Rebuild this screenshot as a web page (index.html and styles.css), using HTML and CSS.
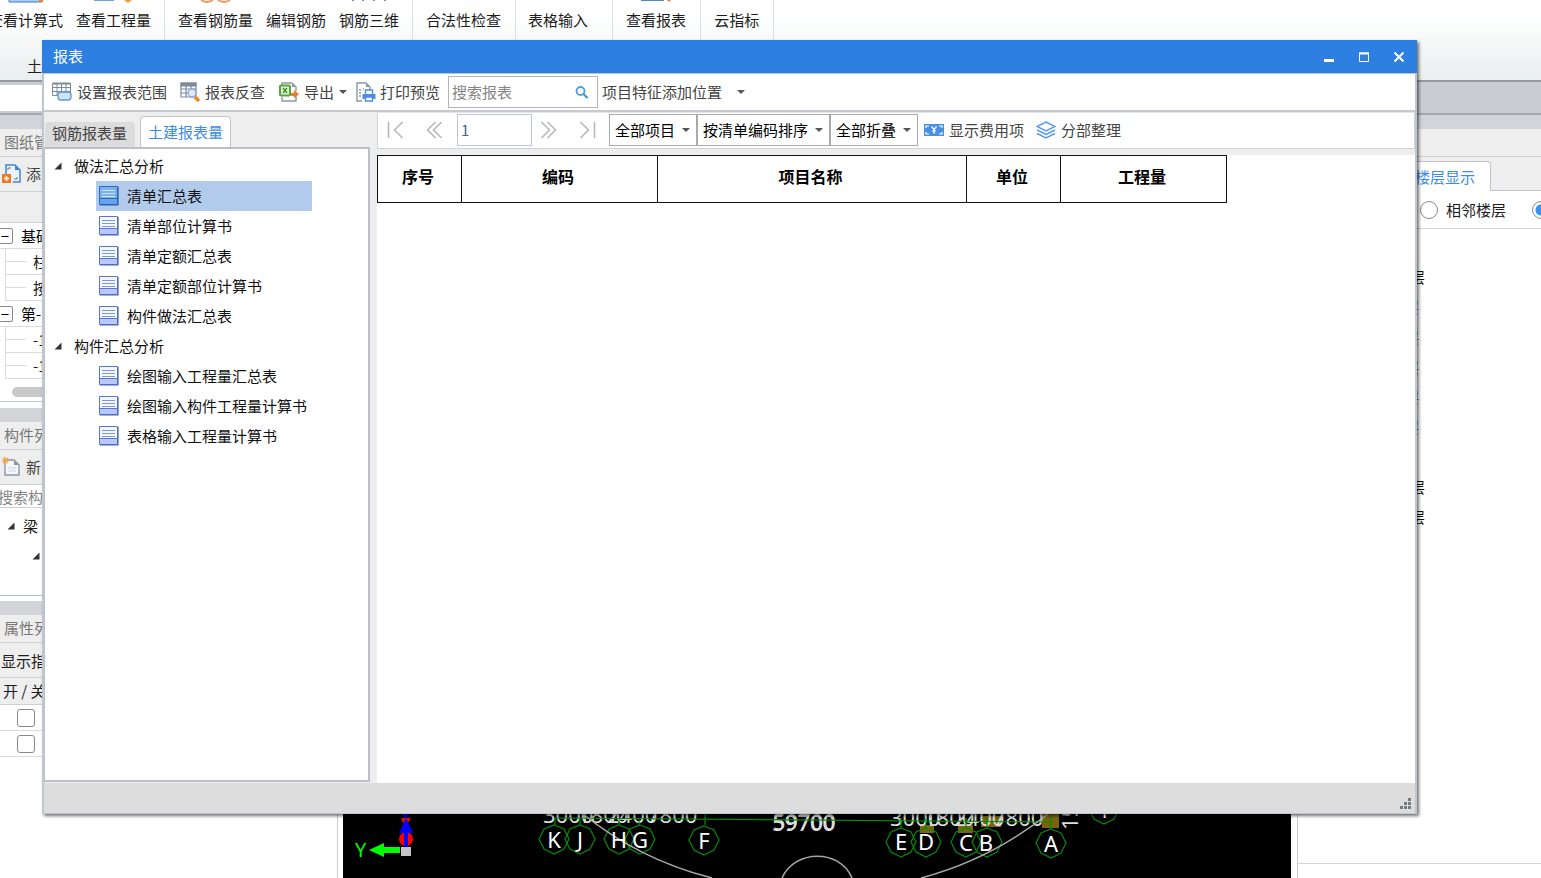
FILE: index.html
```
<!DOCTYPE html>
<html lang="zh-CN">
<head>
<meta charset="utf-8">
<title>报表</title>
<link rel="stylesheet" href="styles.css">
</head>
<body>
<svg class="defs" aria-hidden="true">
  <symbol id="doc" viewBox="0 0 20 20">
    <path d="M.5 .5h18v18H.5z" fill="#f4f7ff" stroke="#5676cf"/>
    <path d="M1 13h17v5H1z" fill="#b9c8ff"/>
    <path d="M1 12.500h17" stroke="#5676cf"/>
    <path d="M3 4.500h13M3 7.500h13M3 10.500h13" stroke="#7c98e2"/>
    <path d="M1 19h18.500M19 1v18.500" stroke="#4a66b4" stroke-width="1.200"/>
  </symbol>
  <symbol id="doc-on" viewBox="0 0 20 20">
    <path d="M.5 .5h18v18H.5z" fill="#78b0f0" stroke="#2f6cc0"/>
    <path d="M1 13h17v5H1z" fill="#66a4ee"/>
    <path d="M1 12.500h17" stroke="#2f6cc0"/>
    <path d="M3 4.500h13M3 7.500h13M3 10.500h13" stroke="#cfe4fb"/>
    <path d="M1 19h18.500M19 1v18.500" stroke="#2a5ca6" stroke-width="1.200"/>
  </symbol>
  <symbol id="twisty" viewBox="0 0 8 8"><path d="M7.500 .5v7H.5z" fill="#333"/></symbol>
</svg>

<div class="app">
  <header class="ribbon">
    <div class="ribbon-groups">
      <div class="group">
        <button class="rbtn"><svg width="36" height="3"><path d="M1 0v2h33V0" fill="#a9cdf5" stroke="#3e7ecb"/><path d="M31 0h4v2h-4z" fill="#f08030"/></svg>查看计算式</button>
        <button class="rbtn"><svg width="40" height="3"><path d="M0 0h20v1H0z" fill="#6ba4ea"/><path d="M30 0h8l-4 3z" fill="#f39a33"/></svg>查看工程量</button>
      </div>
      <div class="group">
        <button class="rbtn"><svg width="34" height="3"><path d="M2 0q6 4 12 0M19 0q6 4 12 0" fill="none" stroke="#f29a62" stroke-width="2"/></svg>查看钢筋量</button>
        <button class="rbtn"><svg width="34" height="3"></svg>编辑钢筋</button>
        <button class="rbtn"><svg width="34" height="3"><path d="M1 0v1M11 0v1M22 0v1M33 0v1" stroke="#6a93c8" stroke-width="2"/></svg>钢筋三维</button>
      </div>
      <div class="group single"><button class="rbtn"><svg width="34" height="3"></svg>合法性检查</button></div>
      <div class="group wide"><button class="rbtn"><svg width="34" height="3"></svg>表格输入</button></div>
      <div class="group single"><button class="rbtn"><svg width="30" height="3"><path d="M0 0h23v1H0z" fill="#4b85d0"/><path d="M26 0h4l-2 2z" fill="#f08030"/></svg>查看报表</button></div>
      <div class="group single"><button class="rbtn"><svg width="34" height="3"></svg>云指标</button></div>
    </div>
    <div class="ribbon-caption">土</div>
  </header>
  <div class="strip"><div class="strip-box"></div></div>

  <div class="work">
    <aside class="left">
      <section>
        <h2 class="pane-title">图纸管</h2>
        <div class="pane-bar"><button class="tool">
          <svg width="20" height="20" viewBox="0 0 20 20"><path d="M4 10V1h9l5 5v12h-7" fill="#eaf3fd" stroke="#3f84d6" stroke-width="1.5"/><path d="M13 1v5h5z" fill="#3f84d6"/><path d="M6 6V4h3M15 13v2h-3" fill="none" stroke="#777"/><path d="M0 10h9v9H0z" fill="#ef7a25"/><path d="M4.500 12v5M2 14.500h5" stroke="#fff" stroke-width="1.5"/></svg>添</button></div>
        <div class="grid-head"></div>
        <ul class="drawings">
          <li class="parent"><span class="box">−</span>基础</li>
          <li class="child">柱</li>
          <li class="child">按</li>
          <li class="parent"><span class="box">−</span>第-</li>
          <li class="child">-1</li>
          <li class="child">-1</li>
        </ul>
        <div class="scroll"><span></span></div>
      </section>
      <section class="parts">
        <h2 class="pane-title">构件列</h2>
        <div class="pane-bar"><button class="tool">
          <svg width="20" height="20" viewBox="0 0 20 20"><path d="M3 3h9l5 5v10H3z" fill="#f4f6f8" stroke="#8a97a5" stroke-width="1.4"/><path d="M12 3v5h5z" fill="#8a97a5"/><path d="M6 11h8M6 14h8" stroke="#ccd3da"/><path d="M3 0v7M0 3.500h7M1 1l5 5M6 1L1 6" stroke="#f6a13a" stroke-width="1.2"/></svg>新</button></div>
        <input class="part-search" type="text" placeholder="搜索构" aria-label="搜索构件">
        <ul class="part-tree">
          <li><svg width="8" height="8"><use href="#twisty"/></svg>梁</li>
          <li class="deep"><svg width="8" height="8"><use href="#twisty"/></svg></li>
        </ul>
      </section>
      <section class="props">
        <h2 class="pane-title">属性列</h2>
        <div class="props-bar">显示指</div>
        <div class="props-head">开 / 关</div>
        <div class="props-row"><input type="checkbox" aria-label="开关一"></div>
        <div class="props-row"><input type="checkbox" aria-label="开关二"></div>
      </section>
    </aside>

    <main class="canvas">
      <svg class="model" viewBox="343 814 948 64" width="948" height="64">
        <g class="dims">
          <text x="543" y="823">3000</text><text x="578" y="823">1800</text><text x="607" y="823">2400</text><text x="647" y="823">7800</text>
          <text x="772" y="831">59700</text><text x="773" y="830">59700</text>
        </g>
        <g fill="#7a6410"><path d="M920 825h14v8h-14zM958 825h15v8h-15zM981 816h20v11h-20zM1042 814h17v14h-17z"/></g>
        <g class="dims">
          <text x="890" y="826">3000</text><text x="924" y="826">1800</text><text x="954" y="826">2400</text><text x="993" y="826">7800</text>
          <text x="1078" y="830" transform="rotate(-90 1078 830)">15</text>
        </g>
        <g fill="none" stroke="#068a0c" stroke-width="1.2">
          <path d="M555 818L1052 822M555 818v7M580 818v7M619 818v7M639 818v7M705 814v11M901 818v10M926 818v10M966 818v10M987 818v10M1051 814v15"/>
          <path id="ring" d="M554 825l10 4 5 10-5 10-10 5-10-5-5-10 5-10z"/>
          <use href="#ring" x="26"/><use href="#ring" x="65"/><use href="#ring" x="86"/><use href="#ring" x="150" y="1"/>
          <use href="#ring" x="347" y="3"/><use href="#ring" x="372" y="3"/><use href="#ring" x="412" y="3"/><use href="#ring" x="433" y="3"/><use href="#ring" x="497" y="4"/><use href="#ring" x="550" y="-30"/>
        </g>
        <g fill="none" stroke="#a8a8a8" stroke-width="1.5">
          <path d="M583 814Q640 860 712 878M921 878Q990 860 1048 814M782 878C795 849 840 849 852 878"/>
        </g>
        <g class="axes">
          <text x="554" y="848">K</text><text x="580" y="848">J</text><text x="619" y="848">H</text><text x="640" y="848">G</text><text x="704" y="849">F</text>
          <text x="901" y="850">E</text><text x="926" y="850">D</text><text x="966" y="851">C</text><text x="986" y="851">B</text><text x="1051" y="852">A</text><text x="1104" y="818">1</text>
        </g>
        <circle cx="406" cy="839" r="7" fill="#f00"/>
        <path d="M401 818h10l-3 5h-5z" fill="#e01010"/>
        <path d="M404 847v-14h-5l7-15 7 15h-5v14zM401 814h8l-3 4z" fill="#00f"/>
        <path d="M400 847h-16v-4l-15 7 15 7v-4h16z" fill="#0f0"/>
        <path d="M401 847h10v9h-10z" fill="#c4c4c4"/>
        <text class="axis-y" x="355" y="857">Y</text>
      </svg>
    </main>

    <aside class="right">
      <div class="pane-title"></div>
      <div class="floor-tabs"><button class="floor-tab">楼层显示</button></div>
      <div class="floor-mode">
        <label><input type="radio" name="floor">相邻楼层</label>
        <label><input type="radio" name="floor" checked aria-label="全部楼层"></label>
      </div>
      <ul class="floors">
        <li class="long">层</li><li>层</li><li>层</li><li>层</li><li>层</li><li>层</li><li></li><li class="long">层</li><li class="long">层</li>
      </ul>
    </aside>
  </div>
</div>

<section class="dialog" role="dialog" aria-labelledby="dlg-title">
  <header class="titlebar">
    <h1 id="dlg-title">报表</h1>
    <button aria-label="最小化"><svg width="12" height="12"><path d="M1 9.500h10" stroke="#fff" stroke-width="3"/></svg></button>
    <button aria-label="最大化"><svg width="12" height="12"><path d="M1.500 2v8.500h9V2z" fill="none" stroke="#fff"/><path d="M1 2.500h10" stroke="#fff" stroke-width="2"/></svg></button>
    <button aria-label="关闭"><svg width="12" height="12"><path d="M1.500 1.500l9 9M10.500 1.500l-9 9" stroke="#fff" stroke-width="2"/></svg></button>
  </header>

  <div class="toolbar main-bar">
    <button class="tool">
      <svg width="20" height="20" viewBox="0 0 20 20"><path d="M.5 1.500h18v12H.5zM.5 5.500h18M.5 9.500h18M5 1.500v12M9.500 1.500v12M14 1.500v12" fill="none" stroke="#7d8b99"/><path d="M.5 1.500h18" stroke="#7d8b99" stroke-width="2"/><rect x="6" y="10" width="13" height="8" rx="3" fill="#cfe4fb" stroke="#5a97e0" stroke-width="1.300"/></svg>设置报表范围</button>
    <button class="tool">
      <svg width="20" height="20" viewBox="0 0 20 20"><path d="M1 1h15v14H1zM1 7h15M1 11h15M6 3v12M11 3v12" fill="none" stroke="#7d8b99" stroke-width="1.200"/><path d="M.5 .5h16v4H.5z" fill="#7d8b99"/><circle cx="12" cy="11" r="4" fill="#dfe9fb" stroke="#8ba6e6" stroke-width="1.400"/><path d="M15 15l4 4" stroke="#f08a1c" stroke-width="3.500"/></svg>报表反查</button>
    <button class="tool export">
      <svg width="20" height="20" viewBox="0 0 20 20"><path d="M3 3V1h10l4 4v4M17 14v5H3v-4" fill="none" stroke="#8a97a5" stroke-width="1.400"/><path d="M13 1v4h4z" fill="#8a97a5"/><rect x="1" y="3.500" width="10" height="10" rx="1" fill="#e7f5df" stroke="#58a639" stroke-width="2"/><path d="M4 6l4 5M8 6l-4 5" stroke="#3f8f28" stroke-width="1.500"/><path d="M12 11h3V8l5 4-5 4.500V14h-3z" fill="#f07a25"/></svg>导出<span class="caret"></span></button>
    <button class="tool print">
      <svg width="20" height="20" viewBox="0 0 20 20"><path d="M6 19H1V1h9l4 4v3" fill="none" stroke="#8a97a5" stroke-width="1.400"/><path d="M10 1v4h4z" fill="#8a97a5"/><path d="M3 8h2M3 11h2M3 14h2M7 7h1" stroke="#8a97a5" stroke-width="1.500"/><path d="M9.500 8h7v5h-7zM9.500 15h7v4h-7z" fill="#fff" stroke="#4a8fe2" stroke-width="1.400"/><path d="M6.500 12h13v5h-3v-2h-7v2h-3z" fill="#4a8fe2"/></svg>打印预览</button>
    <label class="search">
      <input type="text" placeholder="搜索报表" aria-label="搜索报表">
      <svg width="14" height="14" viewBox="0 0 14 14"><circle cx="5.500" cy="6" r="4" fill="none" stroke="#4f9fd6" stroke-width="1.800"/><path d="M8.500 9l4 4" stroke="#3f93cf" stroke-width="2.200"/></svg>
    </label>
    <button class="tool place">项目特征添加位置<span class="caret"></span></button>
  </div>

  <div class="dialog-body">
    <nav class="side">
      <div class="tabs" role="tablist">
        <button role="tab" class="tab" aria-selected="false">钢筋报表量</button>
        <button role="tab" class="tab active" aria-selected="true">土建报表量</button>
      </div>
      <div class="tree">
        <div class="node"><svg width="8" height="8"><use href="#twisty"/></svg>做法汇总分析</div>
        <ul>
          <li class="selected"><svg width="20" height="20"><use href="#doc-on"/></svg>清单汇总表</li>
          <li><svg width="20" height="20"><use href="#doc"/></svg>清单部位计算书</li>
          <li><svg width="20" height="20"><use href="#doc"/></svg>清单定额汇总表</li>
          <li><svg width="20" height="20"><use href="#doc"/></svg>清单定额部位计算书</li>
          <li><svg width="20" height="20"><use href="#doc"/></svg>构件做法汇总表</li>
        </ul>
        <div class="node"><svg width="8" height="8"><use href="#twisty"/></svg>构件汇总分析</div>
        <ul>
          <li><svg width="20" height="20"><use href="#doc"/></svg>绘图输入工程量汇总表</li>
          <li><svg width="20" height="20"><use href="#doc"/></svg>绘图输入构件工程量计算书</li>
          <li><svg width="20" height="20"><use href="#doc"/></svg>表格输入工程量计算书</li>
        </ul>
      </div>
    </nav>

    <div class="report">
      <div class="toolbar page-bar">
        <button class="pager" aria-label="首页"><svg width="18" height="18"><path d="M1.500 1v16M15.500 1l-8 8 8 8" /></svg></button>
        <button class="pager" aria-label="上一页"><svg width="18" height="18"><path d="M9.500 1l-8 8 8 8M15.500 1l-8 8 8 8"/></svg></button>
        <input class="page-no" type="text" value="1" aria-label="页码">
        <button class="pager" aria-label="下一页"><svg width="18" height="18"><path d="M2.500 1l8 8-8 8M8.500 1l8 8-8 8"/></svg></button>
        <button class="pager" aria-label="末页"><svg width="18" height="18"><path d="M1.500 1l8 8-8 8M15.500 1v16"/></svg></button>
        <span class="picks">
          <span class="pick"><select aria-label="项目范围"><option>全部项目</option></select></span>
          <span class="pick"><select aria-label="排序"><option>按清单编码排序</option></select></span>
          <span class="pick"><select aria-label="折叠"><option>全部折叠</option></select></span>
        </span>
        <button class="tool soft">
          <svg width="20" height="12" viewBox="0 0 20 12"><path d="M0 0h20v12H0z" fill="#4a90e2"/><path d="M2 4V2h3M15 2h3v2M18 8v2h-3M5 10H2V8M7.500 2.500L10 5.500l2.500-3M10 5v5M8 7h4" fill="none" stroke="#fff" stroke-width="1.200"/></svg>显示费用项</button>
        <button class="tool soft">
          <svg width="20" height="18" viewBox="0 0 20 18"><path d="M10 1l9 4.500-9 4.500-9-4.500zM1 9l9 4.500L19 9M1 12.500L10 17l9-4.500" fill="none" stroke="#5a9cec" stroke-width="1.500"/></svg>分部整理</button>
      </div>
      <div class="sheet">
        <table>
          <colgroup><col class="c-no"><col class="c-code"><col class="c-name"><col class="c-unit"><col class="c-qty"></colgroup>
          <thead><tr><th>序号</th><th>编码</th><th>项目名称</th><th>单位</th><th>工程量</th></tr></thead>
        </table>
      </div>
    </div>
  </div>

  <footer class="status">
    <svg width="12" height="12"><path d="M8 0h3v3H8zM4 4h3v3H4zM8 4h3v3H8zM0 8h3v3H0zM4 8h3v3H4zM8 8h3v3H8z" fill="#747a84"/></svg>
  </footer>
</section>
</body>
</html>
```
FILE: styles.css
```
* { box-sizing: border-box; }
body, h1, h2, ul { margin: 0; padding: 0; }
ul { list-style: none; }
body {
  height: 100vh;
  overflow: hidden;
  background: #fff;
  color: #1c1c1c;
  font: 15px/20px "Noto Sans CJK SC", sans-serif;
}
button, input, select { font: inherit; color: inherit; }
button { border: 0; padding: 0; background: none; white-space: nowrap; }
svg { flex: none; }
.defs { position: absolute; width: 0; height: 0; }

/* main window */
.app { height: 100vh; display: flex; flex-direction: column; overflow: hidden; }
.ribbon {
  flex: none;
  height: 80px;
  background: linear-gradient(#fff 15px, #e9eeee);
  overflow: hidden;
}
.ribbon-groups { display: flex; height: 50px; margin-left: -25px; }
.group { display: flex; gap: 13px; padding: 0 13px; border-right: 1px solid #dcdfe2; align-items: flex-start; }
.group.single { padding-right: 14px; }
.group.wide { padding: 0 24px 0 12px; }
.rbtn { display: flex; flex-direction: column; align-items: center; gap: 7px; }
.ribbon-caption { padding: 6px 0 0 27px; }
.strip {
  flex: none;
  height: 35px;
  padding: 3px 0 4px;
  background: #c9ccd1;
  border-top: 2px solid #95999d;
  border-bottom: 2px solid #a4a8ad;
}
.strip-box { width: 337px; height: 26px; background: #fff; }
.work {
  flex: 1;
  min-height: 0;
  display: grid;
  grid-template-columns: 338px 1fr 244px;
  border-top: 14px solid #d2d4d9;
}
.left { overflow: hidden; border-right: 1px solid #c9ccd1; }
.pane-title {
  height: 28px;
  padding: 3px 4px;
  background: #eee;
  border-bottom: 1px solid #ccd0d5;
  color: #777;
  font-size: 15px;
  font-weight: 400;
}
.left section { border-bottom: 14px solid #d2d4d9; height: 293px; overflow: hidden; }
.left .parts { height: 193px; }
.left .props { height: auto; border-bottom: 0; }
.pane-bar { height: 35px; display: flex; background: #eee; border-bottom: 1px solid #ccd0d5; }
.tool { display: flex; align-items: center; gap: 5px; padding: 0 6px; color: #444; }
.left .tool { padding: 0 2px; gap: 4px; }
.grid-head { height: 31px; background: #eee; border-bottom: 1px solid #ccd0d5; }
.drawings li { height: 26px; line-height: 26px; border-bottom: 1px solid #d8dadd; white-space: nowrap; }
.drawings .child { display: flex; align-items: center; gap: 7px; margin-left: 5px; border-left: 1px solid #d8dadd; }
.child::before { content: ""; width: 20px; border-top: 1px solid #d8dadd; }
.drawings .parent { display: flex; align-items: center; gap: 8px; margin-left: -3px; color: #000; }
.box { width: 16px; height: 16px; border: 1px solid #888; border-radius: 2px; line-height: 13px; text-align: center; }
.scroll { padding: 8px 12px 4px; border-bottom: 1px solid #c9ccd1; }
.scroll span { display: block; height: 10px; border-radius: 5px; background: #c8c8c8; }
.part-search { display: block; width: 100%; height: 23px; border: 0; border-bottom: 1px solid #ccd0d5; padding: 0; margin-left: -2px; background: #fff; }
::placeholder { color: #858585; opacity: 1; }
.part-tree { height: 88px; border-bottom: 1px solid #b9bcc1; padding-top: 3px; }
.part-tree li { display: flex; align-items: center; height: 30px; gap: 8px; padding-left: 7px; }
.part-tree .deep { padding-left: 32px; }
.props-bar { height: 35px; padding: 8px 1px; background: #eee; border-bottom: 1px solid #ccd0d5; }
.props-head { height: 27px; padding: 3px; background: #eee; border-bottom: 1px solid #ccd0d5; }
.props-row { height: 26px; border-bottom: 1px solid #d8dadd; padding: 4px 17px; display: flex; }
.props-row input { appearance: none; width: 18px; height: 18px; margin: 0; border: 1px solid #888; border-radius: 3px; background: #fff; }

.canvas { margin: 0 6px 0 5px; background: #000; display: flex; align-items: flex-end; overflow: hidden; }
.model { font-family: "Noto Sans", sans-serif; }
.dims text { font-size: 22px; fill: #ddd; }
.axes text { font-size: 22px; fill: #fff; text-anchor: middle; }
.axis-y { font-size: 20px; fill: #0f0; }

.right { display: flex; flex-direction: column; padding-bottom: 14px; border-left: 1px solid #c9ccd1; overflow: hidden; }
.floor-tabs { height: 34px; padding: 4px 50px 0 0; background: #eee; border-bottom: 1px solid #c0c5cc; flex: none; }
.floor-tab { width: 100%; height: 30px; padding-right: 15px; text-align: right; background: #fff; color: #3d8be6; border: 1px solid #c0c5cc; border-bottom: 0; border-radius: 4px 4px 0 0; }
.right .pane-title { flex: none; }
.floor-mode { height: 38px; flex: none; display: flex; align-items: center; gap: 26px; padding-left: 122px; border-bottom: 1px solid #d2d4d9; white-space: nowrap; }
.floor-mode label { display: flex; align-items: center; gap: 8px; }
.floor-mode input { appearance: none; flex: none; width: 18px; height: 18px; margin: 0; border: 1px solid #888; border-radius: 50%; background: #fff; }
.floor-mode input:checked { background: radial-gradient(#3b8fee 5px, #fff 6px); }
.floors { flex: 1; padding-top: 33px; border-bottom: 1px solid #d2d4d9; }
.floors li { height: 30px; line-height: 30px; width: 121px; text-align: right; color: #25507c; }
.floors .long { width: 127px; color: #111; }

/* report window */
.dialog {
  position: absolute;
  inset: 40px 124px 64px 42px;
  display: flex;
  flex-direction: column;
  background: #eee;
  border: solid #c0c6cf;
  border-width: 0 2px 1px;
  box-shadow: 2px 2px 3px rgba(0, 0, 0, .55);
}
.titlebar {
  flex: none;
  height: 34px;
  margin: 0 -2px;
  padding: 0 12px 0 11px;
  display: flex;
  align-items: center;
  gap: 23px;
  background: #2d7fe1;
  color: #fff;
  border-bottom: 1px solid #b5c4d8;
}
.titlebar h1 { flex: 1; padding-bottom: 2px; font-size: 15px; font-weight: 400; }
.titlebar button { display: flex; }
.toolbar { display: flex; align-items: center; background: #fff; }
.main-bar { flex: none; height: 38px; gap: 1px; padding-left: 2px; border-bottom: 2px solid #c6cad0; }
.main-bar .tool { height: 28px; }
.export.tool { padding: 0 2px 0 7px; }
.print.tool { gap: 4px; padding-right: 7px; }
.caret { border: 4px solid transparent; border-top-color: #555; border-bottom: 0; }
.search { display: flex; align-items: center; width: 150px; height: 32px; padding: 0 8px 0 3px; border: 1px solid #b4b4b4; background: #fff; }
.search input { flex: 1; min-width: 0; border: 0; padding: 0; outline: 0; }
.place.tool { padding: 0 3px; gap: 15px; }

.dialog-body { flex: 1; min-height: 0; display: flex; gap: 7px; }
.side { width: 326px; flex: none; display: flex; flex-direction: column; }
.tabs { flex: none; height: 35px; display: flex; align-items: flex-end; gap: 5px; padding-left: 1px; }
.tab { height: 25px; padding: 0 8px 3px 7px; background: #dcdcdd; color: #444; border-radius: 4px 4px 0 0; }
.tab.active { height: 31px; padding: 0 7px; background: #fff; color: #3d8be6; border: 1px solid #c0c5cc; border-bottom: 0; }
.tree { flex: 1; border: 2px solid #bcbfc5; border-left-width: 1px; background: #fff; padding-top: 2px; margin-bottom: 1px; color: #111; }
.node { display: flex; align-items: center; gap: 12px; height: 30px; padding-left: 9px; }
.tree li { display: flex; align-items: center; gap: 8px; height: 30px; width: 216px; margin-left: 51px; padding-left: 3px; white-space: nowrap; }
.tree .selected { background: #b2cbed; }

.report { flex: 1; min-width: 0; display: flex; flex-direction: column; }
.page-bar { flex: none; height: 37px; padding-bottom: 2px; border: 1px solid #cdd3da; border-top-color: #e2e5e9; }
.pager { width: 38px; height: 30px; padding-left: 9px; display: flex; align-items: center; }
.pager svg { fill: none; stroke: #b5b5b5; stroke-width: 1.5; }
.page-bar .pager:nth-child(2) { padding-left: 10px; width: 41px; }
.page-no { width: 75px; height: 32px; border: 1px solid #bfc6d0; padding: 0 3px; color: #46648c; background: #fff; }
.page-no + .pager { padding-left: 7px; }
.picks { display: flex; margin-left: 1px; }
.pick { position: relative; border: 1px solid #aaa; background: #fff; height: 32px; }
.pick::after { content: ""; position: absolute; right: 6px; top: 13px; border: 4px solid transparent; border-top-color: #555; border-bottom: 0; pointer-events: none; }
.pick select { appearance: none; height: 30px; border: 0; padding: 0 20px 0 5px; background: none; color: #000; }
.soft.tool { color: #444; }
.sheet { flex: 1; margin-top: 6px; background: #fff; }
table { border-collapse: collapse; table-layout: fixed; width: 850px; color: #000; }
th { height: 47px; padding: 0 3px 6px 0; border: 1px solid #111; font-size: 16px; font-weight: 700; }
.c-no { width: 84px; }
.c-code { width: 196px; }
.c-name { width: 309px; }
.c-unit { width: 94px; }
.c-qty { width: 166px; }
.status { flex: none; height: 30px; display: flex; justify-content: flex-end; align-items: flex-end; padding: 3px; background: #ddddde; }
```
